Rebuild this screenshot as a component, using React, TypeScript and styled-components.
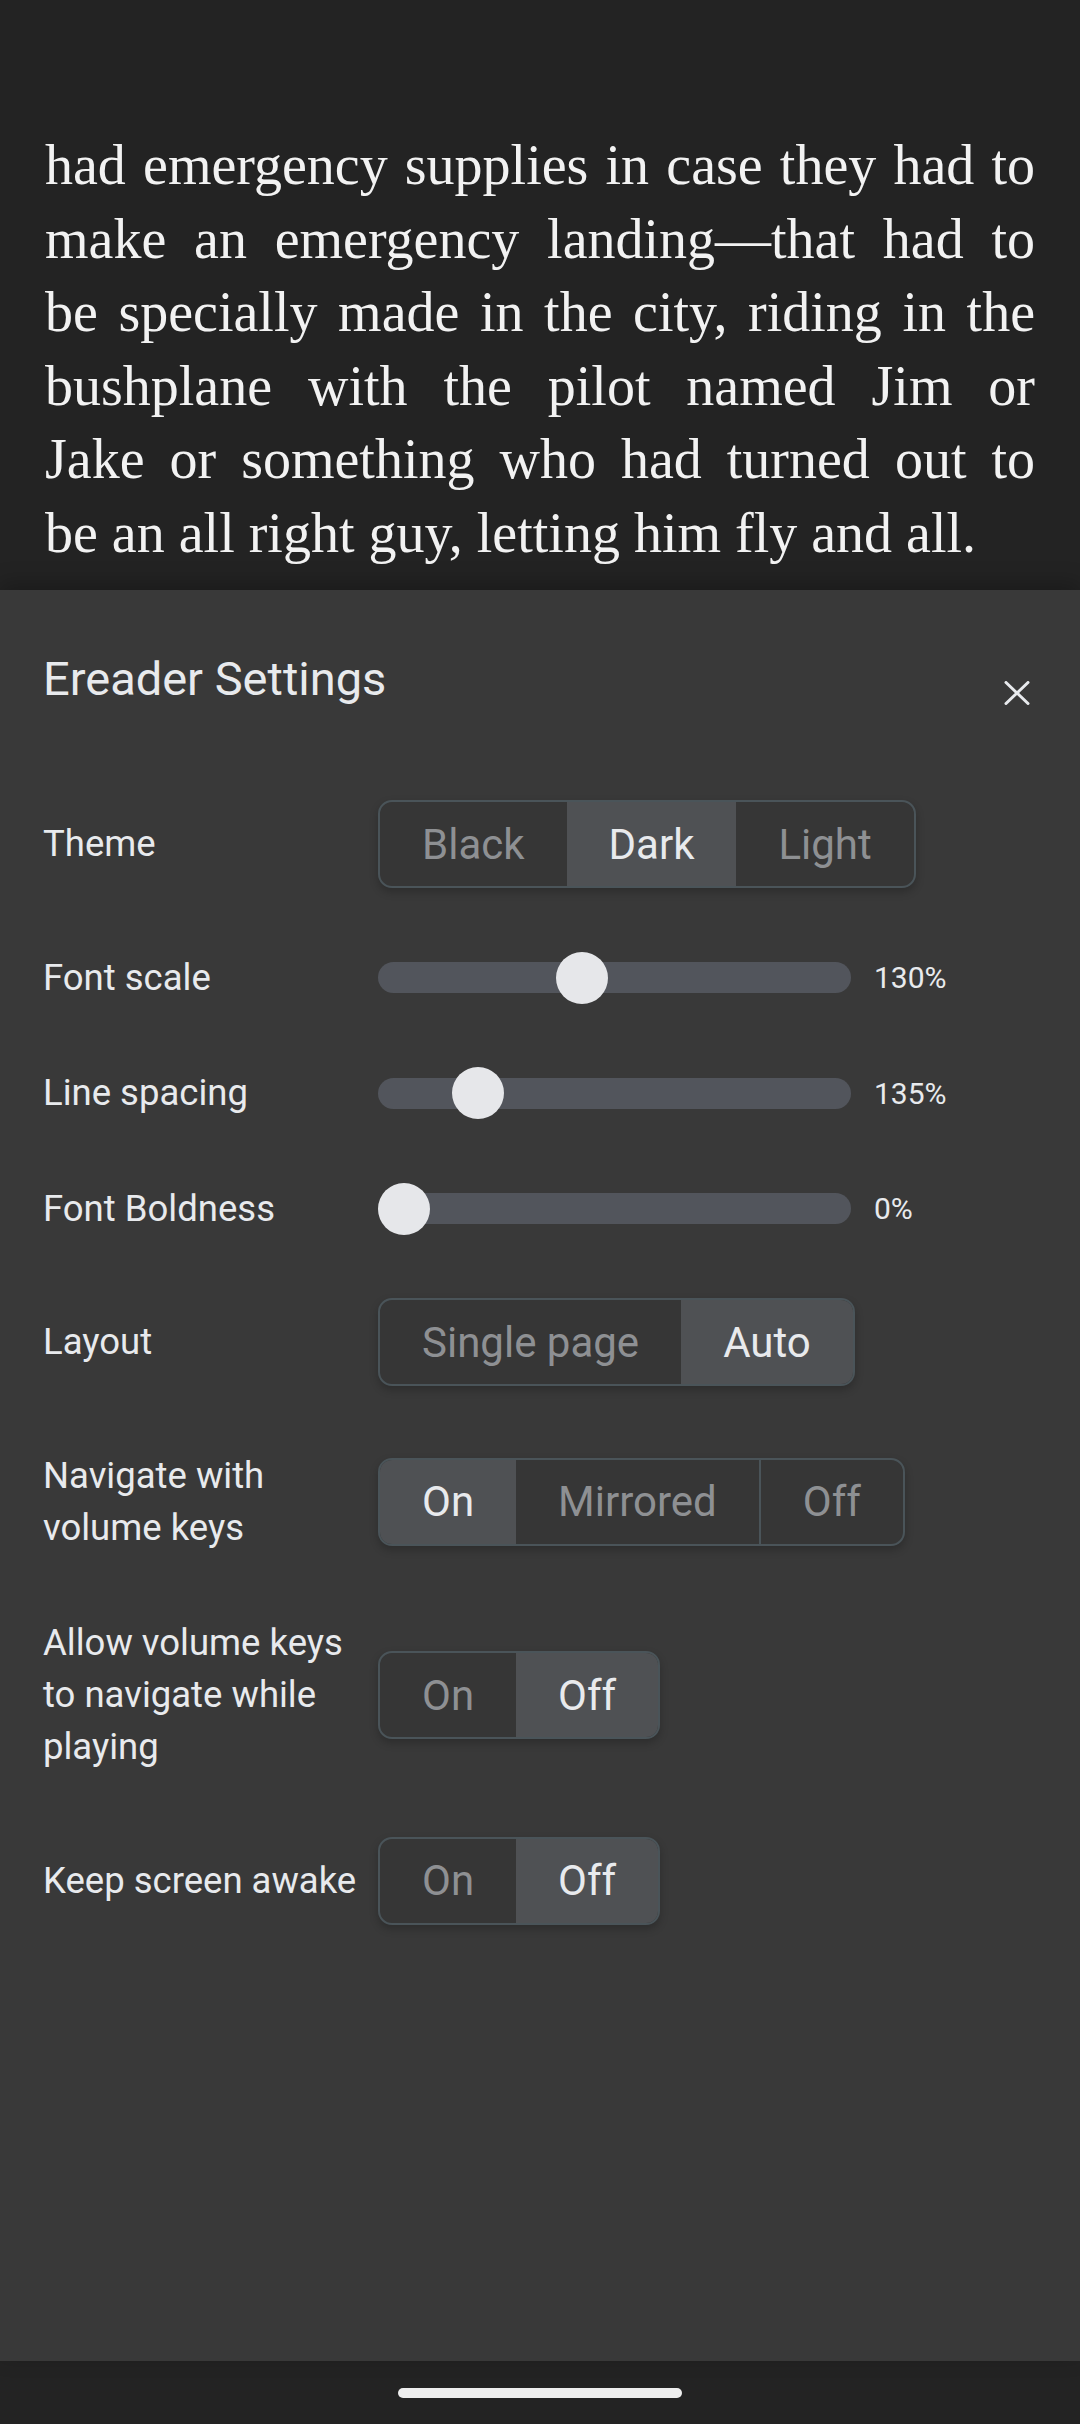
import React from 'react';
import styled, { createGlobalStyle } from 'styled-components';

const colors = {
  page: '#232323',
  panel: '#393939',
  text: '#e8eaed',
  muted: '#8e9093',
  border: '#4a5459',
  segment: '#363636',
  selected: '#4f5154',
  track: '#52555c',
  thumb: '#e6e7ea',
};

const GlobalStyle = createGlobalStyle`
  html, body {
    margin: 0;
    padding: 0;
    background: ${colors.page};
  }
  body {
    font-family: Roboto, 'Noto Sans', sans-serif;
  }
`;

const Screen = styled.div`
  width: 1080px;
  height: 2424px;
  display: flex;
  flex-direction: column;
  background: ${colors.page};
  overflow: hidden;
`;

const Reader = styled.div`
  flex: none;
  height: 590px;
  box-sizing: border-box;
  padding: 129px 45px 0;
  overflow: hidden;
`;

const Passage = styled.div`
  font-family: 'Liberation Serif', 'DejaVu Serif', serif;
  font-size: 56px;
  line-height: 73.5px;
  color: #f2f2f2;
`;

const PassageLine = styled.div<{ $last?: boolean }>`
  text-align: ${(p) => (p.$last ? 'left' : 'justify')};
  text-align-last: ${(p) => (p.$last ? 'left' : 'justify')};
`;

const Panel = styled.section`
  flex: 1;
  position: relative;
  z-index: 1;
  background: ${colors.panel};
  box-shadow: 0 -6px 20px rgba(0, 0, 0, 0.25);
  padding: 61px 43px 0;
`;

const Header = styled.header`
  display: flex;
  justify-content: space-between;
  align-items: flex-start;
`;

const Title = styled.h2`
  margin: 0;
  font-size: 47px;
  font-weight: 400;
  line-height: 55px;
  color: ${colors.text};
`;

const CloseButton = styled.button`
  width: 40px;
  height: 40px;
  margin-top: 22px;
  padding: 0;
  border: 0;
  background: none;
  display: flex;
  align-items: center;
  justify-content: center;
  color: ${colors.text};
`;

const SettingsList = styled.div`
  margin-top: 87px;
  display: flex;
  flex-direction: column;
  gap: 63.5px;
`;

const Row = styled.div`
  display: flex;
  align-items: center;
`;

const Label = styled.div`
  flex: none;
  width: 335px;
  font-size: 36.5px;
  line-height: 52px;
  color: ${colors.text};
`;

const Segmented = styled.div`
  display: flex;
  height: 88px;
  box-sizing: border-box;
  border: 2px solid ${colors.border};
  border-radius: 14px;
  overflow: hidden;
  background: ${colors.segment};
  box-shadow: 0 4px 8px rgba(0, 0, 0, 0.22);
`;

const Segment = styled.button<{ $active: boolean; $divider: boolean }>`
  display: flex;
  align-items: center;
  padding: 0 42px;
  border: 0;
  border-left: ${(p) => (p.$divider ? `2px solid ${colors.border}` : '0')};
  background: ${(p) => (p.$active ? colors.selected : 'transparent')};
  color: ${(p) => (p.$active ? colors.text : colors.muted)};
  font-family: Roboto, 'Noto Sans', sans-serif;
  font-size: 42px;
  font-weight: 400;
`;

const SliderWrap = styled.div`
  display: flex;
  align-items: center;
`;

const Track = styled.div`
  position: relative;
  width: 473px;
  height: 31px;
  border-radius: 16px;
  background: ${colors.track};
`;

const Thumb = styled.div`
  position: absolute;
  top: 50%;
  width: 52px;
  height: 52px;
  margin-top: -26px;
  border-radius: 50%;
  background: ${colors.thumb};
`;

const Value = styled.span`
  margin-left: 23px;
  font-size: 30px;
  color: ${colors.text};
`;

const NavBar = styled.div`
  flex: none;
  height: 63px;
  box-sizing: border-box;
  padding-top: 27px;
  display: flex;
  justify-content: center;
  background: ${colors.page};
`;

const HomeIndicator = styled.div`
  width: 284px;
  height: 10px;
  border-radius: 5px;
  background: #eeeeee;
`;

const passage = [
  'had emergency supplies in case they had to',
  'make an emergency landing\u2014that had to',
  'be specially made in the city, riding in the',
  'bushplane with the pilot named Jim or',
  'Jake or something who had turned out to',
  'be an all right guy, letting him fly and all.',
];

type Setting =
  | { kind: 'segments'; label: string[]; options: string[]; selected: number }
  | { kind: 'slider'; label: string[]; position: number; value: string };

const settings: Setting[] = [
  { kind: 'segments', label: ['Theme'], options: ['Black', 'Dark', 'Light'], selected: 1 },
  { kind: 'slider', label: ['Font scale'], position: 0.423, value: '130%' },
  { kind: 'slider', label: ['Line spacing'], position: 0.176, value: '135%' },
  { kind: 'slider', label: ['Font Boldness'], position: 0, value: '0%' },
  { kind: 'segments', label: ['Layout'], options: ['Single page', 'Auto'], selected: 1 },
  {
    kind: 'segments',
    label: ['Navigate with', 'volume keys'],
    options: ['On', 'Mirrored', 'Off'],
    selected: 0,
  },
  {
    kind: 'segments',
    label: ['Allow volume keys', 'to navigate while', 'playing'],
    options: ['On', 'Off'],
    selected: 1,
  },
  { kind: 'segments', label: ['Keep screen awake'], options: ['On', 'Off'], selected: 1 },
];

const CloseIcon = () => (
  <svg width="26" height="24" viewBox="0 0 26 24" fill="none">
    <path d="M2 1.5L24 22.5M24 1.5L2 22.5" stroke="currentColor" strokeWidth="3" strokeLinecap="round" />
  </svg>
);

const TRACK = 473;
const THUMB = 52;

const Control: React.FC<{ setting: Setting }> = ({ setting }) => {
  if (setting.kind === 'slider') {
    return (
      <SliderWrap>
        <Track>
          <Thumb style={{ left: setting.position * (TRACK - THUMB) }} />
        </Track>
        <Value>{setting.value}</Value>
      </SliderWrap>
    );
  }
  return (
    <Segmented>
      {setting.options.map((opt, i) => (
        <Segment
          key={opt}
          $active={i === setting.selected}
          $divider={i > 0 && i !== setting.selected && i - 1 !== setting.selected}
        >
          {opt}
        </Segment>
      ))}
    </Segmented>
  );
};

export default function App() {
  return (
    <Screen>
      <GlobalStyle />
      <Reader>
        <Passage>
          {passage.map((line, i) => (
            <PassageLine key={i} $last={i === passage.length - 1}>
              {line}
            </PassageLine>
          ))}
        </Passage>
      </Reader>
      <Panel>
        <Header>
          <Title>Ereader Settings</Title>
          <CloseButton aria-label="Close">
            <CloseIcon />
          </CloseButton>
        </Header>
        <SettingsList>
          {settings.map((s) => (
            <Row key={s.label.join(' ')}>
              <Label>
                {s.label.map((l, i) => (
                  <div key={i}>{l}</div>
                ))}
              </Label>
              <Control setting={s} />
            </Row>
          ))}
        </SettingsList>
      </Panel>
      <NavBar>
        <HomeIndicator />
      </NavBar>
    </Screen>
  );
}
